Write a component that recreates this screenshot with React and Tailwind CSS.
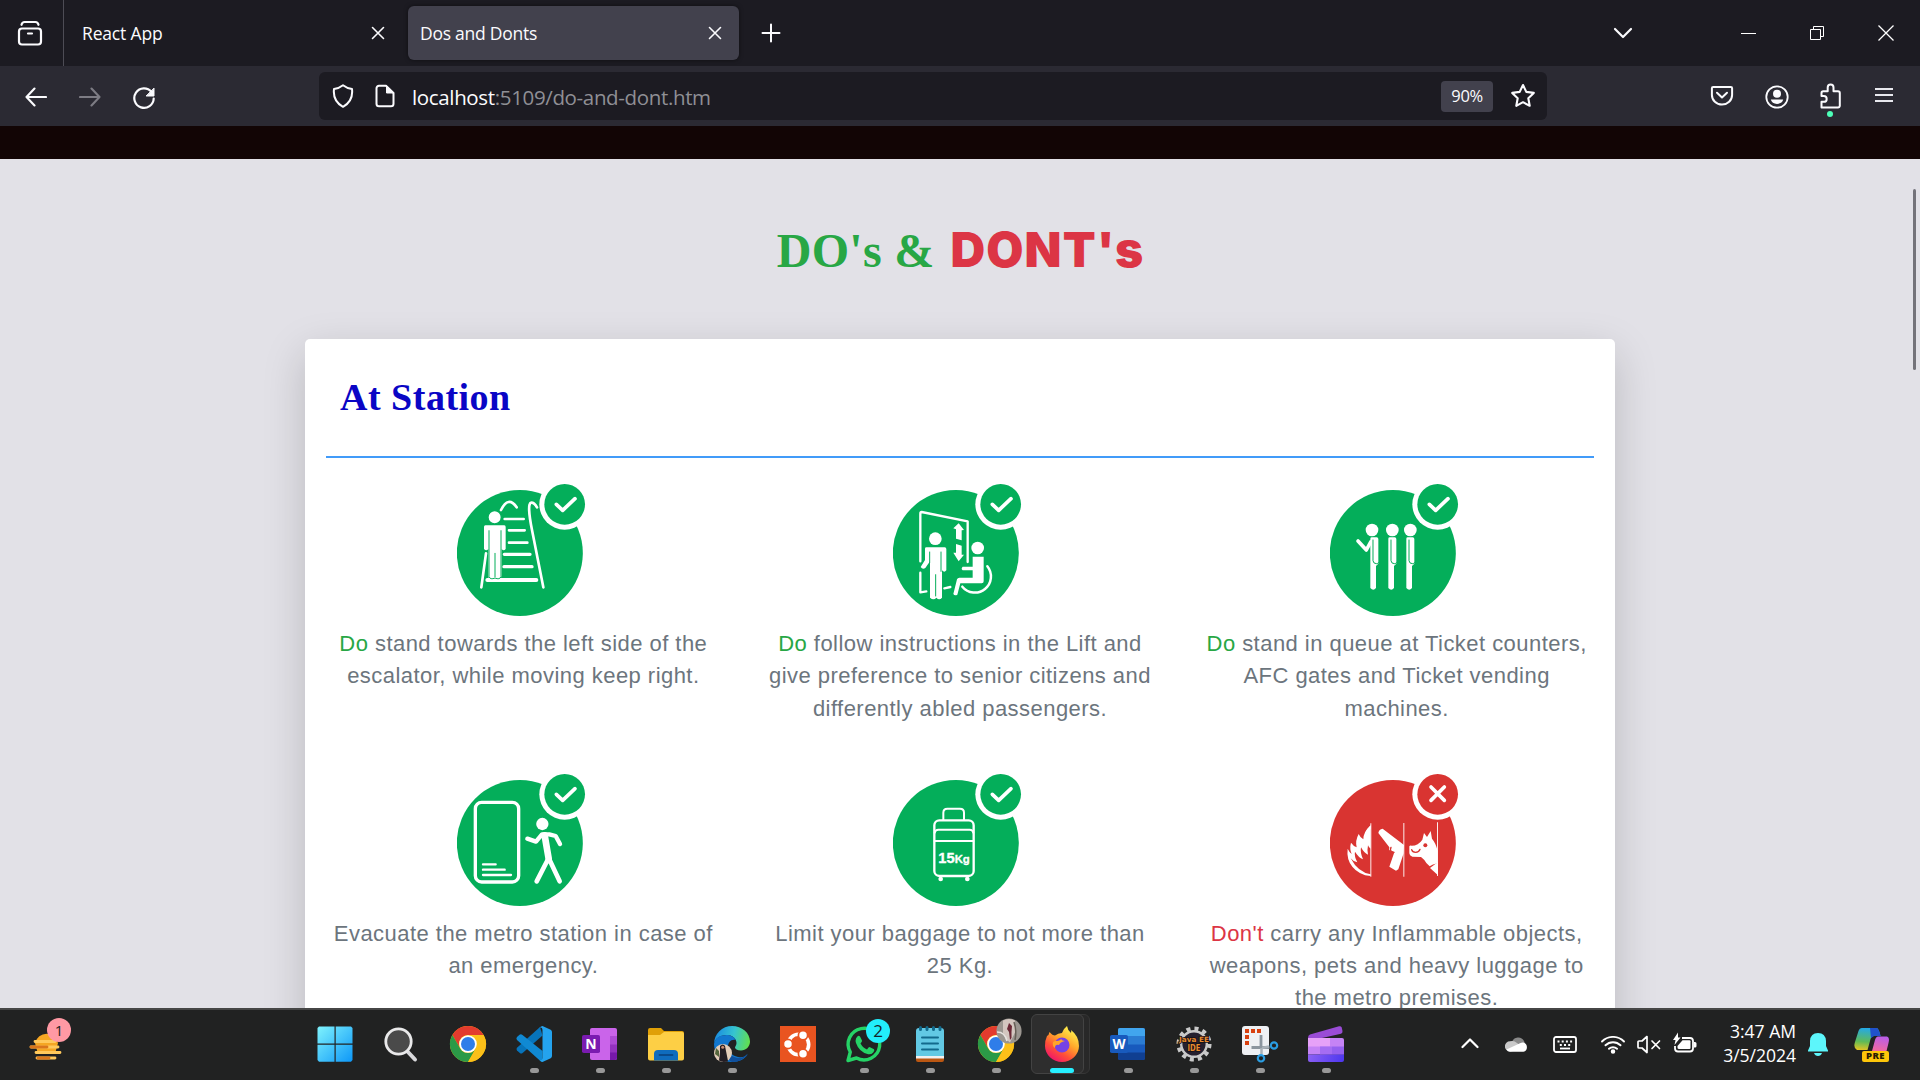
import React from "react";

const GREEN = "#04ae5a";
const RED = "#d93431";

/* ---------- Shared helpers ---------- */

function Line({ size = 24, w = 2, children, className = "", box }) {
  return (
    <svg
      width={size}
      height={size}
      viewBox={box || "0 0 24 24"}
      fill="none"
      stroke="currentColor"
      strokeWidth={w}
      strokeLinecap="round"
      strokeLinejoin="round"
      className={`block shrink-0 ${className}`}
    >
      {children}
    </svg>
  );
}

function Cell({ className = "", children }) {
  return <div className={`flex shrink-0 items-center justify-center ${className}`}>{children}</div>;
}

/* ---------- Browser chrome ---------- */

const TabClose = () => (
  <Line size={14} w={1.6} box="0 0 14 14">
    <path d="M1.5 1.5l11 11M12.500 1.500l-11 11" />
  </Line>
);

function TabBar() {
  return (
    <div className="flex h-[66px] items-center bg-[#1c1b22] text-[#fbfbfe]">
      <Cell className="h-full w-[64px] border-r border-[#4d4c55] pr-1">
        <Line size={26} w={2.2} box="0 0 26 26">
          <rect x="2" y="8.500" width="22" height="16" rx="3" />
          <path d="M4.500 4.800C5 2.800 6 2 7.500 2h11c1.500 0 2.500.8 3 2.800M11 13.500h4" />
        </Line>
      </Cell>
      <div className="flex h-[54px] w-[344px] items-center justify-between pr-[23px] pl-[18px]">
        <span className="text-[17.5px] tracking-[-0.16px]">React App</span>
        <TabClose />
      </div>
      <div className="flex h-[54px] w-[331px] items-center justify-between rounded-[6px] bg-[#42414d] pr-[17px] pl-[12px] shadow-[0_0_4px_rgba(0,0,0,0.5)]">
        <span className="text-[17.5px] tracking-[-0.25px]">Dos and Donts</span>
        <TabClose />
      </div>
      <Cell className="h-full w-[64px]">
        <Line size={20} w={2} box="0 0 20 20">
          <path d="M10 1.500v17M1.500 10h17" />
        </Line>
      </Cell>
      <div className="ml-auto flex h-full">
        <Cell className="w-[62px]">
          <Line size={20} w={2.2} box="0 0 20 20">
            <path d="M2 6l8 8 8-8" />
          </Line>
        </Cell>
        <div className="w-[60px]" />
        <Cell className="w-[69px]">
          <div className="h-px w-[15px] bg-white" />
        </Cell>
        <Cell className="w-[69px] pr-[2px]">
          <svg width="14" height="14" viewBox="0 0 14 14" fill="none" stroke="#fff" strokeWidth="1">
            <path d="M.5 3.500h10v10h-10zM3.500 3.500v-3h10v10h-3" />
          </svg>
        </Cell>
        <Cell className="w-[68px]">
          <svg width="16" height="16" viewBox="0 0 16 16" stroke="#fff" strokeWidth="1.3">
            <path d="M.5.5l15 15M15.500.5l-15 15" />
          </svg>
        </Cell>
      </div>
    </div>
  );
}

function ToolBar() {
  return (
    <div className="flex h-[60px] items-center bg-[#2b2a33] px-[9px] text-[#fbfbfe]">
      <Cell className="w-[54px] pt-[2px]">
        <Line size={22} w={2.1} box="0 0 22 22">
          <path d="M9.500 2.500L1.500 11l8 8.500M1.800 11H21" />
        </Line>
      </Cell>
      <Cell className="w-[54px] pt-[2px] text-[#7d7c84]">
        <Line size={22} w={2.1} box="0 0 22 22">
          <path d="M12.500 2.500l8 8.500-8 8.500M20.200 11H1" />
        </Line>
      </Cell>
      <Cell className="w-[54px] pt-[3px]">
        <Line size={24} w={2.2} box="0 0 24 24">
          <path d="M19.500 6A9.700 9.700 0 1 0 21.700 12.500" />
          <path d="M22 2.500v7.500h-7.500z" fill="currentColor" strokeWidth="1" />
        </Line>
      </Cell>
      <div className="ml-[148px] flex h-12 w-[1228px] items-center rounded-[6px] bg-[#1c1b22]">
        <Line size={24} w={2} box="0 0 24 24" className="ml-3">
          <path d="M12 1.200c2.600 2 5.600 3.300 9 3.900.9 7.600-2.300 14-9 17.700C5.300 19.100 2.100 12.700 3 5.100c3.400-.6 6.400-1.900 9-3.900z" />
        </Line>
        <Line size={24} w={2} box="0 0 24 24" className="ml-[18px]">
          <path d="M13 1.800H6a2.500 2.500 0 0 0-2.500 2.500v15.400A2.500 2.500 0 0 0 6 22.200h12.000a2.500 2.500 0 0 0 2.500-2.500V9z" />
          <path d="M13.500 2v7h7z" fill="currentColor" strokeWidth="1" />
        </Line>
        <span className="mt-[2px] ml-[15px] text-[20.5px] tracking-[-0.35px] text-[#8f8f95]">
          <span className="text-[#fbfbfe]">localhost</span>:5109/do-and-dont.htm
        </span>
        <Cell className="ml-auto h-[31px] w-[52px] rounded-[4px] bg-[#42414d] text-[16.5px] tracking-[-0.4px]">90%</Cell>
        <Line size={26} w={2.1} box="0 0 26 26" className="mr-[11px] ml-[17px]">
          <path d="M13 2l3.300 6.900 7.500 1-5.500 5.300 1.400 7.600L13 19.200l-6.700 3.600 1.400-7.600L2.200 9.900l7.500-1z" />
        </Line>
      </div>
      <div className="ml-auto flex">
        <Cell className="w-[54px]">
          <Line size={24} w={2} box="0 0 24 24">
            <path d="M3.200 3h17.600c.8 0 1.300.5 1.300 1.300V11a10.100 9.600 0 0 1-20.200 0V4.300C1.900 3.500 2.400 3 3.200 3z" />
            <path d="M7 8.800l5 4.700 5-4.700" />
          </Line>
        </Cell>
        <Cell className="w-[54px] pt-px pl-px">
          <Line size={24} w={1.8} box="0 0 24 24">
            <circle cx="12" cy="12" r="10.700" />
            <circle cx="12" cy="8.700" r="4" fill="currentColor" stroke="none" />
            <path d="M5.800 14.500h12.400c-.6 2.700-3 4.400-6.200 4.400s-5.600-1.700-6.200-4.400z" fill="currentColor" stroke="none" />
          </Line>
        </Cell>
        <Cell className="relative w-[54px]">
          <Line size={26} w={2} box="0 0 26 26">
            <path d="M4.500 24.500h16.500a1.800 1.800 0 0 0 1.800-1.800V10a1.800 1.800 0 0 0-1.800-1.800h-4.500V4.500a2.900 2.900 0 0 0-5.800 0v3.700H6.300A1.800 1.800 0 0 0 4.500 10v3h2.300a2.900 2.900 0 0 1 0 5.800H4.500z" />
          </Line>
          <div className="absolute top-[28px] h-[6px] w-[6px] rounded-full bg-[#4dffb8]" />
        </Cell>
        <Cell className="w-[54px]">
          <div className="mb-[3px] flex flex-col gap-1">
            <div className="h-[2px] w-[18px] bg-[#e8e8ee]" />
            <div className="h-[2px] w-[18px] bg-[#e8e8ee]" />
            <div className="h-[2px] w-[18px] bg-[#e8e8ee]" />
          </div>
        </Cell>
      </div>
    </div>
  );
}

/* ---------- Pictograms ---------- */

function Sign({ forbidden, children }) {
  const color = forbidden ? RED : GREEN;
  return (
    <svg width="133" height="132" viewBox="0 0 399 396" fill="none" strokeLinecap="round" strokeLinejoin="round" className="block">
      <circle cx="188.500" cy="207" r="189" fill={color} />
      {children}
      <circle cx="323" cy="61" r="76" fill="#fff" />
      <circle cx="323" cy="61" r="61" fill={color} />
      {forbidden ? (
        <path d="M303 39l40 40M343 39l-40 40" stroke="#fff" strokeWidth="11" />
      ) : (
        <path d="M298 61l19 18 37-35" stroke="#fff" strokeWidth="11" />
      )}
    </svg>
  );
}

const Escalator = () => (
  <Sign>
    <g transform="translate(-51 -42)" stroke="#fff">
      <path d="M194 147h57M207 181h47M207 218h55" strokeWidth="8" />
      <path d="M193 253h77M192 290h84" strokeWidth="10" />
      <path d="M142 330h147" strokeWidth="12" />
      <path d="M310 352L276 180C266 130 264 98 274 98q9 0 17 14M183 120q22-44 47-8M124 352l14-102" strokeWidth="8" />
      <circle cx="164" cy="142" r="20" fill="#fff" stroke={GREEN} strokeWidth="4" />
      <path d="M136 166h57q4 0 4 5v66q-6 8-12 0v80q-3 12-10 12t-11-6q-4 6-11 6t-8-12v-80q-6 8-13 0v-66q0-5 4-5z" fill="#fff" stroke="none" />
      <path d="M147 182v138q4 10 18 4 14 6 18-4V182M165 250v70" stroke={GREEN} strokeWidth="3" />
    </g>
  </Sign>
);

const Lift = () => (
  <Sign>
    <g transform="translate(-40 -42)" stroke="#fff">
      <path d="M264 276V154L126 126q-4 0-4 5v143M122 308v59l18-3M194 355l18-4" strokeWidth="7" />
      <circle cx="167" cy="206" r="19" fill="#fff" stroke="none" />
      <path d="M136 236q0-4 4-4h55q5 0 5 5v64q-6 8-13 0v82q-8 10-17 0-8 10-19 0V274l-14 20q-8 6-14-3l13-21z" fill="#fff" stroke="none" />
      <path d="M150 246v32M184 246v58M168 314v64" stroke={GREEN} strokeWidth="3" />
      <path d="M237 160l16 20-7 1v30l-17-5v-28l-8-3zM229 222l17 5v27h7l-16 20-16-26h8z" fill="#fff" stroke="none" />
      <circle cx="294" cy="234" r="19" fill="#fff" stroke="none" />
      <path d="M279 260h33v74q0 6-6 6h-64l-9 34q-8 4-12-2l11-44q2-5 7-5h40v-22h-30q-6-5 0-11h30z" fill="#fff" stroke="none" />
      <path d="M323 289a48 48 0 1 1-75 61" strokeWidth="7.500" />
    </g>
  </Sign>
);

const Person = ({ x, head }) => (
  <g transform={`translate(${x} 0)`}>
    <circle cx={head} cy="180" r="19" fill="#fff" stroke="none" />
    <path d="M0 206q0-4 4-4h15q5 0 5 5v74l-7 7v66q-8 11-17 0z" fill="#fff" stroke="none" />
    <path d="M8 210v62q1 9 10 9 5 0 7-3" stroke={GREEN} strokeWidth="3" />
  </g>
);

const Queue = () => (
  <Sign>
    <g transform="translate(-60 -42)" stroke="#fff">
      <path d="M144 213l25 27 13-24" strokeWidth="11" />
      <Person x={181} head={5} />
      <Person x={235} head={12} />
      <Person x={289} head={12} />
    </g>
  </Sign>
);

const Evacuate = () => (
  <Sign>
    <g transform="translate(-52 -42)" stroke="#fff">
      <rect x="107" y="127" width="130" height="239" rx="19" strokeWidth="10" />
      <path d="M130 313h38M130 329h65M130 345h84" strokeWidth="7" />
      <circle cx="308" cy="192" r="18.500" fill="#fff" stroke="none" />
      <path d="M263 236l26 9 18-22h22l19 5 13 24" strokeWidth="13" />
      <path d="M315 226l12 70" strokeWidth="20" />
      <path d="M327 294l-36 70M327 294l33 70" strokeWidth="14" />
    </g>
  </Sign>
);

const Baggage = () => (
  <Sign>
    <g transform="translate(0 -42)" stroke="#fff">
      <path d="M151 180v-22q0-12 12-12h38q12 0 12 12v22" strokeWidth="6" />
      <rect x="124" y="181" width="118" height="167" rx="15" strokeWidth="7" />
      <path d="M125 218q2-9 11-9h94q9 0 11 9M125 243h116" strokeWidth="6" />
      <circle cx="143" cy="357" r="7" fill="#fff" stroke="none" />
      <circle cx="223" cy="357" r="7" fill="#fff" stroke="none" />
      <text x="136" y="308" fill="#fff" stroke="#fff" strokeWidth="1" fontFamily="Liberation Sans, sans-serif" fontWeight="700" fontSize="44">
        15<tspan fontSize="34">Kg</tspan>
      </text>
    </g>
  </Sign>
);

const Inflammable = () => (
  <Sign forbidden>
    <g transform="translate(-60 -42)" stroke="none" fill="#fff">
      <path d="M181 190h3v160h-3zM280 189h3v161h-3zM381 187h3v161h-3z" opacity=".9" />
      <path d="M182 196q-22 20-22 42-10-6-14-16-11 20-6 40-9-3-17-14-5 18 2 34-7-5-12-16-4 32 14 54 20 25 55 28v-5q-38-6-60-48 9 11 20 12-10-19-7-32 11 18 24 23-9-20-6-36 9 17 21 22-3-16 0-28 3 8 8 10z" />
      <path d="M182 206q-12 18-8 32l-10 2q-4-22 18-44z" />
      <path d="M205 219q2-12 13-13l64 49-1 25-16 48-7 4-20-12 15-43q-10-1-16-8l1-7z" />
      <path d="M243 262q-4 8 1 12l8 3" fill="none" stroke={RED} strokeWidth="4" />
      <path d="M298 259q2-4 7-2 20 0 32-18l5-20 9 12 11-18 4 23q12 14 17 37v37q-16 3-24 9-11-9-16-19l-10-9-26-1q-9-3-9-10z" />
      <path d="M360 324l24-18v40z" />
      <circle cx="346" cy="256" r="6" fill={RED} />
      <path d="M305 269q2 8 12 8t13-9" fill="none" stroke={RED} strokeWidth="4" />
    </g>
  </Sign>
);

/* ---------- Page ---------- */

const ITEMS = [
  { Icon: Escalator, lead: "Do", tone: "text-[#28a745]", lines: [" stand towards the left side of the", "escalator, while moving keep right."] },
  { Icon: Lift, lead: "Do", tone: "text-[#28a745]", lines: [" follow instructions in the Lift and", "give preference to senior citizens and", "differently abled passengers."] },
  { Icon: Queue, lead: "Do", tone: "text-[#28a745]", lines: [" stand in queue at Ticket counters,", "AFC gates and Ticket vending", "machines."] },
  { Icon: Evacuate, lines: ["Evacuate the metro station in case of", "an emergency."] },
  { Icon: Baggage, lines: ["Limit your baggage to not more than", "25 Kg."] },
  { Icon: Inflammable, lead: "Don't", tone: "text-[#dc3545]", lines: [" carry any Inflammable objects,", "weapons, pets and heavy luggage to", "the metro premises."] },
];

function Item({ Icon, lead, tone, lines }) {
  return (
    <div className="flex h-[289.500px] flex-col items-center">
      <Icon />
      <p className="mt-[12px] text-center font-['Liberation_Sans',Arial,sans-serif] text-[22px] leading-[32.4px] tracking-[0.46px] whitespace-nowrap text-[#6c757d]">
        {lines.map((line, i) => (
          <span key={line} className="block">
            {i === 0 && lead ? <span className={tone}>{lead}</span> : null}
            {line}
          </span>
        ))}
      </p>
    </div>
  );
}

function Page() {
  return (
    <div className="flex h-[882px] flex-col overflow-hidden bg-[#e2e1e7]">
      <div className="h-[33px] shrink-0 bg-[#120505]" />
      <main className="relative flex flex-1 flex-col items-center">
        <h1 className="mt-[60px] flex h-[64px] items-center gap-[16px] pl-px whitespace-nowrap">
          <span className="font-['Liberation_Serif',serif] text-[48px] font-bold tracking-[0.3px] text-[#28a745]">DO's &amp;</span>
          <span className="pb-[2px] font-[Inter,sans-serif] text-[48px] font-black tracking-[1.1px] text-[#dc3545]">DONT's</span>
        </h1>
        <section className="mt-[56px] h-[760px] w-[1310px] shrink-0 rounded-[5px] bg-white shadow-[0_14px_43px_rgba(0,0,0,0.175)]">
          <div className="mx-[21px] h-[119px] border-b-2 border-[#419bf9] pt-[34px] pl-[14px]">
            <h2 className="font-['Liberation_Serif',serif] text-[38px] leading-[48px] font-bold tracking-[0.5px] text-[#0a05c5]">At Station</h2>
          </div>
          <div className="grid grid-cols-3 pt-[26px]">
            {ITEMS.map((item) => (
              <Item key={item.lines[0]} {...item} />
            ))}
          </div>
        </section>
        <div className="absolute top-[30px] right-[4px] h-[181px] w-[3px] rounded-full bg-[#74737a]" />
      </main>
    </div>
  );
}

/* ---------- Taskbar icons ---------- */

const Art = ({ children, className = "" }) => (
  <svg width="36" height="36" viewBox="0 0 36 36" fill="none" className={`block overflow-visible ${className}`}>
    {children}
  </svg>
);

const Windows = () => (
  <Art>
    <defs>
      <linearGradient id="win" x1="0" y1="0" x2="36" y2="36" gradientUnits="userSpaceOnUse">
        <stop stopColor="#7ff3fd" />
        <stop offset="1" stopColor="#0a95f8" />
      </linearGradient>
    </defs>
    <path d="M1 .500h15.500v17H-.500V2zM17.700.500H33L34.500 2v15.500H17.700zM-.500 18.700h17v17H1L-.500 34zM17.700 18.700h16.800V34L33 35.700H17.700z" fill="url(#win)" />
  </Art>
);

const Search = () => (
  <Art>
    <path d="M23.500 25.500l7.500 8" stroke="#d9d9dc" strokeWidth="4" strokeLinecap="round" />
    <circle cx="14.500" cy="15.500" r="12.700" fill="#4a4a4a" stroke="#e9e9ea" strokeWidth="2.800" />
  </Art>
);

const Chrome = () => (
  <Art>
    <circle cx="18" cy="18" r="18" fill="#fbbc05" />
    <path d="M18 0A18 18 0 0 1 33.600 9H18a9 9 0 0 0-7.800 13.500L2.400 9A18 18 0 0 1 18 0z" fill="#e33b2e" />
    <path d="M2.400 9A18 18 0 0 0 18 36l7.800-13.500a9 9 0 0 1-15.600 0z" fill="#2b9a47" />
    <path d="M33.600 9A18 18 0 0 1 18 36l7.800-13.500A9 9 0 0 0 18 9z" fill="#fcc019" />
    <circle cx="18" cy="18" r="8.800" fill="#fff" />
    <circle cx="18" cy="18" r="7" fill="#2f7de9" />
  </Art>
);

const VSCode = () => (
  <Art>
    <path d="M26.500 9.500L6.300 27.300q-1.300.7-2.500-.2L1 24.500q-1-1.500 0-2.800L24 1z" fill="#0774bb" />
    <path d="M1 11l2.500-2.300q1.500-.8 3 .3L26.500 25v10.800q-1.500-.2-3-1.500L1 14q-1.300-1.500 0-3z" fill="#1089d3" />
    <path d="M26.500 0L34.700 3.700Q36 4.500 36 6v24q0 1.500-1.300 2.300L26.500 36q-1.500-.3-3-1.700 3 .7 3-2.300V4q0-3-3-2.300Q25 .300 26.500 0z" fill="#24a3ee" />
  </Art>
);

const OneNote = () => (
  <Art>
    <rect x="8" y="2" width="27" height="32" rx="2" fill="#ca64ea" />
    <path d="M28 10h7v9h-7z" fill="#ae4bd5" />
    <path d="M28 18.500h7V27h-7z" fill="#9332bf" />
    <path d="M28 26.500h7V32q0 2-2 2h-5z" fill="#7719aa" />
    <rect x="0" y="9" width="18" height="18" rx="1.800" fill="#7a1bb0" />
    <text x="9" y="23.300" textAnchor="middle" fill="#fff" fontFamily="Open Sans, sans-serif" fontSize="14" fontWeight="700">N</text>
  </Art>
);

const Explorer = () => (
  <Art>
    <path d="M0 4q0-2 2-2h11l3 3h18q2 0 2 2v8H0z" fill="#e0a007" />
    <path d="M0 9h12l4-3h18q2 0 2 2v24.500q0 2-2 2H2q-2 0-2-2z" fill="#fdcf45" />
    <path d="M6 34.500V28q0-4 4-4h16q4 0 4 4v6.500z" fill="#0f6cbd" />
    <path d="M11.500 29h13" stroke="#0a4a8a" strokeWidth="1.800" strokeLinecap="round" />
  </Art>
);

const Edge = () => (
  <Art>
    <defs>
      <linearGradient id="edge" x1="2" y1="8" x2="36" y2="16" gradientUnits="userSpaceOnUse">
        <stop stopColor="#1b8fe0" />
        <stop offset=".5" stopColor="#36c4d0" />
        <stop offset="1" stopColor="#63e04b" />
      </linearGradient>
    </defs>
    <path d="M0 18A18 18 0 0 1 18 0c10 0 18 7 18 15.500 0 5-4 9-9 9-4 0-6-1.500-6-3 0-1 1.500-2 1.500-4.500C22.500 12 18 9 12.500 9 6 9 1 12.500 0 18z" fill="url(#edge)" />
    <path d="M0 18C1 12 6 9 12.500 9c4 0 8 2 9.500 5-10-2-12 14 2 17 4 1 8-.5 10-3C31 33 25 36 18 36A18 18 0 0 1 0 18z" fill="#1277cf" />
    <path d="M14 20c-1 7 4 12 11 12 3 0 6-1.500 8.500-4.500C31 33 25 36 18 36c-5-2-8-10-4-16z" fill="#104f9c" />
    <circle cx="9" cy="27" r="9" fill="#e3cdb9" />
    <path d="M6 20q3-3 5 0l1 5 2 10q-5 2-9-.5l1-8z" fill="#231d23" />
    <path d="M2 22l3 3v6l-4-3z" fill="#55663c" />
    <circle cx="8.700" cy="21.300" r="1.500" fill="#c98d70" />
  </Art>
);

const Ubuntu = () => (
  <Art>
    <rect width="36" height="36" fill="#e95420" />
    <circle cx="18.500" cy="18.500" r="10.200" stroke="#fff" strokeWidth="3.600" />
    <g fill="#fff" stroke="#e95420" strokeWidth="1.700">
      <circle cx="8" cy="18" r="4.600" />
      <circle cx="23" cy="9.300" r="4.600" />
      <circle cx="23" cy="27.800" r="4.600" />
    </g>
  </Art>
);

const WhatsApp = () => (
  <Art>
    <path d="M2 34.500l2.300-8.500A15.800 15.800 0 1 1 10.500 32z" stroke="#25d366" strokeWidth="3.400" strokeLinejoin="round" />
    <path d="M10 12.500q2-4 4-2l2 4q.4 1-1.500 3 2.500 4.500 6.500 6 2-2.800 3-2.300l4 2q1 .8-.8 3.300-2 2.200-5 1.800Q13 26 10 17q-.8-2.500 0-4.500z" fill="#25d366" />
    <circle cx="32" cy="5" r="12" fill="#22eefb" />
    <text x="32" y="11.200" textAnchor="middle" fill="#14262a" fontFamily="Open Sans, sans-serif" fontSize="17">2</text>
  </Art>
);

const Notepad = () => (
  <Art>
    <path d="M4 31h28v3q0 2-2 2H6q-2 0-2-2z" fill="#bb5712" />
    <path d="M4 28h28v4.500H4z" fill="#f0f0f0" />
    <path d="M4 5q0-3 3-3h22q3 0 3 3v25H4z" fill="#62c9e4" />
    <path d="M10 11.500h16M10 17.500h16M10 23.500h16" stroke="#126a8c" strokeWidth="2" strokeLinecap="round" />
    <path d="M8.500 1.500v2M15 1.500v2M21.500 1.500v2M28 1.500v2" stroke="#126a8c" strokeWidth="3" strokeLinecap="round" />
  </Art>
);

const ChromeProfile = () => (
  <div className="relative">
    <Chrome />
    <svg width="26" height="26" viewBox="0 0 26 26" className="absolute -top-2 left-[18px]">
      <circle cx="13" cy="13" r="12.600" fill="#9b9690" />
      <path d="M7 2.500q6-3 12 0v12l-5 10q-6-4-7-10z" fill="#d3c6bf" />
      <path d="M13 5l3 3-.5 6v6l-1.500 2-1-8-2-3z" fill="#6b2936" />
      <path d="M1 14q8 0 10 9" stroke="#e6e3df" strokeWidth="1.500" fill="none" />
      <path d="M18 4q3 9 1 18" stroke="#665f56" strokeWidth="1.500" fill="none" />
    </svg>
  </div>
);

const Firefox = () => (
  <Art>
    <defs>
      <linearGradient id="fox" x1="29" y1="3" x2="8" y2="34" gradientUnits="userSpaceOnUse">
        <stop stopColor="#fff44f" />
        <stop offset=".4" stopColor="#ffa52a" />
        <stop offset=".7" stopColor="#ff5038" />
        <stop offset="1" stopColor="#f0146b" />
      </linearGradient>
    </defs>
    <path d="M3 10q2-1 2.500-4 3 3.500 5.500 3.500 3-2.500 7-2.500Q19 3 23 0q.5 4 4 7 .5-2 0-3 8 6 8 16a17 16 0 0 1-34 0q0-6 2-10z" fill="url(#fox)" />
    <circle cx="18" cy="19" r="7.500" fill="#7542e5" />
    <path d="M11 15q5 0 6-2 1 2 4 2-5 1-6 4-4-1-4 3-3-2-2-6z" fill="#ffa52a" />
  </Art>
);

const Word = () => (
  <Art>
    <rect x="8" y="2" width="27" height="32" rx="2" fill="#185abd" />
    <path d="M8 4q0-2 2-2h23q2 0 2 2v6H8z" fill="#41a5ee" />
    <path d="M8 10h27v8.500H8z" fill="#2b7cd3" />
    <path d="M8 26.500h27V32q0 2-2 2H10q-2 0-2-2z" fill="#103f91" />
    <rect x="0" y="9" width="18" height="18" rx="1.800" fill="#185abd" />
    <text x="9" y="23" textAnchor="middle" fill="#fff" fontFamily="Open Sans, sans-serif" fontSize="13.500" fontWeight="700">W</text>
  </Art>
);

const JavaIde = () => (
  <Art>
    <circle cx="18" cy="18" r="15.300" stroke="#c9c9c9" strokeWidth="4.500" strokeDasharray="4 4.010" />
    <circle cx="18" cy="18" r="12.800" fill="#25202e" stroke="#c9c9c9" strokeWidth="2.400" />
    <g fill="#e88b2e" stroke="#151015" strokeWidth="1.600" paintOrder="stroke" fontFamily="DejaVu Sans, sans-serif" fontWeight="700" textAnchor="middle">
      <text x="18" y="16.300" fontSize="7.200" textLength="30" lengthAdjust="spacingAndGlyphs">Java EE</text>
      <text x="18" y="24.800" fontSize="8.500" textLength="13" lengthAdjust="spacingAndGlyphs">IDE</text>
    </g>
  </Art>
);

const Snip = () => (
  <Art>
    <rect x="0" y="0" width="27" height="29" rx="3" fill="#eef0f3" />
    <path d="M3 3h4v4H3zM9 3h4v4H9zM15 3h4v4h-4zM3 9h4v4H3zM3 15h4v4H3z" fill="#d8400f" />
    <path d="M19 9v13.500M9.500 21.500h18" stroke="#8b959e" strokeWidth="2.800" />
    <path d="M20 22l7-1.500M19.500 22v6" stroke="#a9b1b8" strokeWidth="2.500" />
    <circle cx="32" cy="19.500" r="3.200" stroke="#2a9de2" strokeWidth="2.200" />
    <circle cx="19" cy="32.300" r="3.200" stroke="#2a9de2" strokeWidth="2.200" />
  </Art>
);

const Clipchamp = () => (
  <Art>
    <defs>
      <linearGradient id="clip" x1="0" y1="24" x2="36" y2="36" gradientUnits="userSpaceOnUse">
        <stop stopColor="#8f62f4" />
        <stop offset="1" stopColor="#4c36ef" />
      </linearGradient>
    </defs>
    <path d="M0 12q0-2.800 2-3.500L31 .300q2-.5 2.700 1.200l.8 3.500q.3 2-1.500 2.700L14 12z" fill="#9a4cd6" />
    <path d="M0 12h34q2 0 2 2v14.500H0z" fill="#c583f5" />
    <path d="M0 12h22v8.500H0z" fill="#e6a1f8" />
    <path d="M12 20.500h12v8H12z" fill="#a56df2" />
    <path d="M24 20.500h12v8H24z" fill="#9560ef" />
    <path d="M0 28.500h36V34q0 2-2 2H2q-2 0-2-2z" fill="url(#clip)" />
  </Art>
);

const APPS = [
  { Icon: Windows }, { Icon: Search }, { Icon: Chrome },
  { Icon: VSCode, open: true }, { Icon: OneNote, open: true }, { Icon: Explorer, open: true },
  { Icon: Edge, open: true }, { Icon: Ubuntu }, { Icon: WhatsApp, open: true },
  { Icon: Notepad, open: true }, { Icon: ChromeProfile, open: true }, { Icon: Firefox, active: true },
  { Icon: Word, open: true }, { Icon: JavaIde, open: true }, { Icon: Snip, open: true },
  { Icon: Clipchamp, open: true },
];

function AppButton({ Icon, open, active }) {
  return (
    <div className="relative flex w-[66px] flex-col items-center pt-4">
      {active && (
        <>
          <div className="absolute top-1 left-[8px] h-[60px] w-[53px] rounded-[6px] border border-[#363636] bg-[#282828]" />
          <div className="absolute top-1 left-[2px] h-[60px] w-[53px] rounded-[6px] border border-[#434343] bg-[#2e2e2e]" />
        </>
      )}
      <div className="relative">
        <Icon />
      </div>
      {open && <div className="mt-[6px] h-[5px] w-[9px] rounded-full bg-[#989898]" />}
      {active && <div className="relative mt-[6px] h-[5px] w-6 rounded-full bg-[#26efff]" />}
    </div>
  );
}

function Weather() {
  return (
    <div className="relative ml-[29px] w-[42px]">
      <svg width="42" height="42" viewBox="0 0 42 42" fill="none" className="block">
        <path d="M6 20a12 13 0 0 1 23 0l-3 11H9z" fill="#f5a623" />
        <path d="M6 18.500h20M2 24h27M7 29.500h24M8 35h18" stroke="#ffc95c" strokeWidth="2.800" strokeLinecap="round" />
        <path d="M2 24h16M9 35h11" stroke="#d9761c" strokeWidth="2.800" strokeLinecap="round" />
      </svg>
      <div className="absolute -top-[5px] left-[18px] flex h-6 w-6 items-center justify-center rounded-full bg-[#ff99a4] text-[15px] text-[#222]">1</div>
    </div>
  );
}

function Tray() {
  return (
    <div className="ml-auto flex h-full items-start text-white">
      <Line size={18} w={2.2} box="0 0 18 18" className="mt-6">
        <path d="M1.500 13L9 5.500l7.500 7.500" />
      </Line>
      <svg width="24" height="18" viewBox="0 0 24 18" className="mt-[25px] ml-[26px]">
        <path d="M7 7a6.500 6.500 0 0 1 12-1l2 5-10 3z" fill="#8a8a8a" />
        <path d="M5 16.500A5 5 0 0 1 5 6.300q4-1.200 7 1.700l8 6z" fill="#c9c9c9" />
        <path d="M1.500 14.500L15 8.200q2-1 3.500-.6a4.800 4.800 0 0 1 0 9.200H5q-2.500 0-3.500-2.300z" fill="#fff" />
      </svg>
      <svg width="24" height="18" viewBox="0 0 24 18" fill="none" stroke="#fff" className="mt-[26px] ml-6">
        <rect x="1" y="1" width="22" height="15" rx="2" strokeWidth="1.800" />
        <path d="M4.500 5.500h15M6.800 9h12.500" strokeWidth="2" strokeDasharray="2 2.200" />
        <path d="M7 12.500h10" strokeWidth="1.800" />
      </svg>
      <svg width="24" height="18" viewBox="0 0 24 18" fill="none" stroke="#fff" strokeWidth="1.900" strokeLinecap="round" className="mt-[26px] ml-6">
        <path d="M1 5.500a15.500 15.500 0 0 1 22 0M4.500 9.300a10.700 10.700 0 0 1 15 0M8 12.800a5.800 5.800 0 0 1 8 0" />
        <circle cx="12" cy="15.500" r="1.300" fill="#fff" />
      </svg>
      <svg width="24" height="20" viewBox="0 0 24 20" fill="none" stroke="#fff" strokeWidth="1.700" strokeLinecap="round" strokeLinejoin="round" className="mt-[25px] ml-3">
        <path d="M1 7v5q0 1 1 1h3l5 4.500V1.500L5 6H2q-1 0-1 1zM15 6l7.500 7.500M22.500 6L15 13.500" />
      </svg>
      <svg width="24" height="20" viewBox="0 0 24 20" fill="none" className="mt-[23px] ml-3 overflow-visible">
        <path d="M9 5h8q3 0 3 3v7.500q0 3-3 3H5q-3 0-3-3V13" stroke="#fff" strokeWidth="1.800" />
        <path d="M9.500 7.300h7q1 0 1 1V15q0 1-1 1H6q-1.500 0-1.500-1.500V13z" fill="#fff" />
        <path d="M21 9h1q1.500 0 1.500 1.500v2.500q0 1.500-1.500 1.500h-1zM5-.500L0 7h2.500L1.500 12 7.500 4.500H5z" fill="#fff" />
      </svg>
      <div className="ml-[8px] w-[91px] pt-[9px] text-right text-[17.6px] leading-6 tracking-[-0.05px] whitespace-nowrap">
        <div>3:47 AM</div>
        <div>3/5/2024</div>
      </div>
      <svg width="20" height="24" viewBox="0 0 20 24" className="mt-[23px] ml-[12px]" fill="#5df6fb">
        <path d="M10 0q7.500 0 8 8v5l2 4.500v1H0v-1L2 13V8q.5-8 8-8zM6 20h8q-1 3-4 3t-4-3z" />
      </svg>
      <div className="relative mt-[17px] mr-[28px] ml-[27px] h-[36px] w-[37px]">
        <svg width="36" height="28" viewBox="0 0 36 28" className="-ml-px">
          <defs>
            <linearGradient id="copA" x1="8" y1="0" x2="6" y2="24" gradientUnits="userSpaceOnUse">
              <stop stopColor="#20a8f0" />
              <stop offset=".6" stopColor="#5fba57" />
              <stop offset="1" stopColor="#f4c51c" />
            </linearGradient>
            <linearGradient id="copB" x1="28" y1="8" x2="24" y2="28" gradientUnits="userSpaceOnUse">
              <stop stopColor="#b45cf0" />
              <stop offset="1" stopColor="#ff6b8b" />
            </linearGradient>
          </defs>
          <path d="M8 1h15q2 1 3.500 8H20q-3 0-4 5l-2.500 9H3q-4-2-2-8L4.500 4Q5.500 1 8 1z" fill="url(#copA)" />
          <path d="M16 1h7q2 1 3.500 8H20l-3 2z" fill="#2052cb" />
          <path d="M24 9.500h9q3 1 1.500 6.500l-3 12H14q3-1 4-4l3-11q1-3.500 3-3.500z" fill="url(#copB)" />
        </svg>
        <div className="absolute top-[24px] left-[7px] flex h-[11px] w-[27px] items-center justify-center rounded-[2px] bg-[#fdc60a] text-[9.500px] font-extrabold tracking-[0.5px] text-[#2a1d00]">PRE</div>
      </div>
    </div>
  );
}

function Taskbar() {
  return (
    <footer className="flex h-[72px] items-start border-t-2 border-[#464646] bg-[#212222]">
      <div className="flex w-[303px] pt-[13px]">
        <Weather />
      </div>
      <div className="flex">
        {APPS.map((app, i) => (
          <AppButton key={i} {...app} />
        ))}
      </div>
      <Tray />
    </footer>
  );
}

export default function App() {
  return (
    <div className="h-[1080px] w-[1920px] overflow-hidden font-['Open_Sans',sans-serif]">
      <TabBar />
      <ToolBar />
      <Page />
      <Taskbar />
    </div>
  );
}
